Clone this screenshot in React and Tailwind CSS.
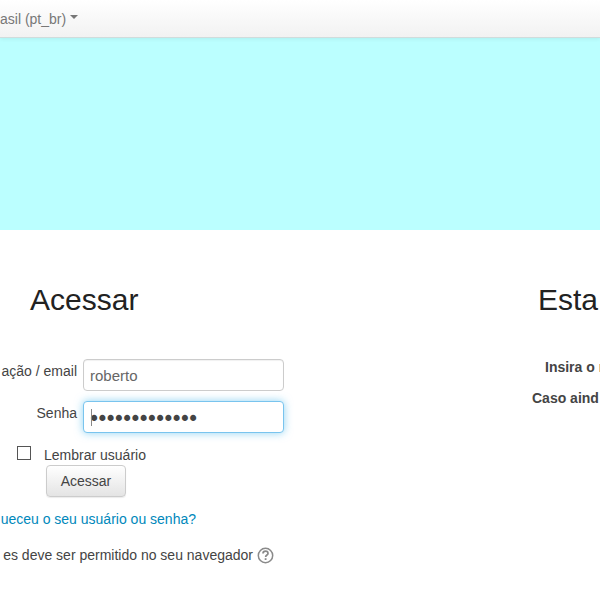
import React from "react";

const sans = "font-['Liberation_Sans',Arial,sans-serif]";

function TopBar() {
  return (
    <header className="relative flex h-[38px] items-center border-b border-[#d0dcdc] bg-linear-to-b from-white to-[#f2f2f2] shadow-[0_1px_4px_rgba(0,0,0,0.07)]">
      <button type="button" className="flex items-center gap-1 text-sm text-[#777777]">
        <span>asil (pt_br)</span>
        <svg width="8" height="4" viewBox="0 0 8 4" className="mb-1" aria-hidden="true">
          <path d="M0 0h8L4 4z" fill="#777777" />
        </svg>
      </button>
    </header>
  );
}

function HelpIcon() {
  return (
    <svg width="17" height="17" viewBox="0 0 17 17" fill="none" aria-hidden="true">
      <circle cx="8.5" cy="8.5" r="7.2" stroke="#8a8a8a" strokeWidth="1.5" />
      <path
        d="M6 6.6C6 5 7 4.2 8.5 4.2S11 5.1 11 6.4C11 8 8.6 8 8.6 10"
        stroke="#8a8a8a"
        strokeWidth="1.7"
      />
      <path d="M7.7 11.2h1.8v1.8H7.7z" fill="#8a8a8a" />
    </svg>
  );
}

function LoginForm() {
  return (
    <section className="w-[284px] shrink-0">
      <h2 className="pl-[30px] text-3xl leading-10 text-[#222222]">Acessar</h2>
      <form className="mt-[39px]" onSubmit={(e) => e.preventDefault()}>
        <div className="flex">
          <label htmlFor="username" className="w-[77px] text-right leading-6 whitespace-nowrap">
            ação / email
          </label>
          <input
            id="username"
            type="text"
            defaultValue="roberto"
            className="ml-1.5 h-8 min-w-0 flex-1 rounded border border-[#cccccc] bg-white px-1.5 text-[15px] text-[#666666] shadow-[inset_0_1px_1px_rgba(0,0,0,0.06)] outline-none"
          />
        </div>
        <div className="mt-2.5 flex">
          <label htmlFor="password" className="w-[77px] text-right leading-6">
            Senha
          </label>
          <div className="relative ml-1.5 flex-1">
            <input
              id="password"
              type="password"
              defaultValue="senhaqualquer"
              className="block h-8 w-full rounded border border-[#79c4ee] bg-white px-1.5 pt-0.5 font-['DejaVu_Sans',sans-serif] text-sm text-[#444444] shadow-[0_0_8px_rgba(82,188,236,0.65)] outline-none [-webkit-text-stroke:2px_#444444]"
            />
            <span className="absolute top-2 left-2 h-[17px] w-px bg-[#888888]" />
          </div>
        </div>
        <div className="mt-3 flex items-center pl-[17px]">
          <input
            id="remember"
            type="checkbox"
            className="mb-1 size-3.5 appearance-none border border-[#555555] bg-white"
          />
          <label htmlFor="remember" className="pl-[13px] leading-5">
            Lembrar usuário
          </label>
        </div>
        <button
          type="submit"
          className="ml-[46px] block h-8 w-20 rounded border border-[#cccccc] bg-linear-to-b from-white to-[#e4e4e4] text-sm shadow-[0_1px_1px_rgba(0,0,0,0.08)]"
        >
          Acessar
        </button>
      </form>
      <p className="mt-3 w-[196px] leading-5">
        <a href="#senha" className="flex justify-end whitespace-nowrap text-[#0088bb]">
          ueceu o seu usuário ou senha?
        </a>
      </p>
      <div className="mt-4 flex w-[274px] items-center justify-end gap-1 leading-5 whitespace-nowrap">
        <span>es deve ser permitido no seu navegador</span>
        <button type="button" aria-label="Ajuda">
          <HelpIcon />
        </button>
      </div>
    </section>
  );
}

function SignupNotice() {
  return (
    <section className="ml-auto w-[68px] shrink-0 overflow-hidden whitespace-nowrap">
      <h2 className="pl-1.5 text-3xl leading-10 text-[#222222]">Esta</h2>
      <div className="mt-[37px] text-sm leading-5 font-bold">
        <p className="pl-[13px]">Insira o n</p>
        <p className="mt-[11px]">Caso aind</p>
      </div>
    </section>
  );
}

export default function App() {
  return (
    <div className={`min-h-screen overflow-hidden bg-white text-sm text-[#444444] ${sans}`}>
      <TopBar />
      <div className="h-48 bg-[#bbffff]" />
      <main className="flex pt-[50px]">
        <LoginForm />
        <SignupNotice />
      </main>
    </div>
  );
}
